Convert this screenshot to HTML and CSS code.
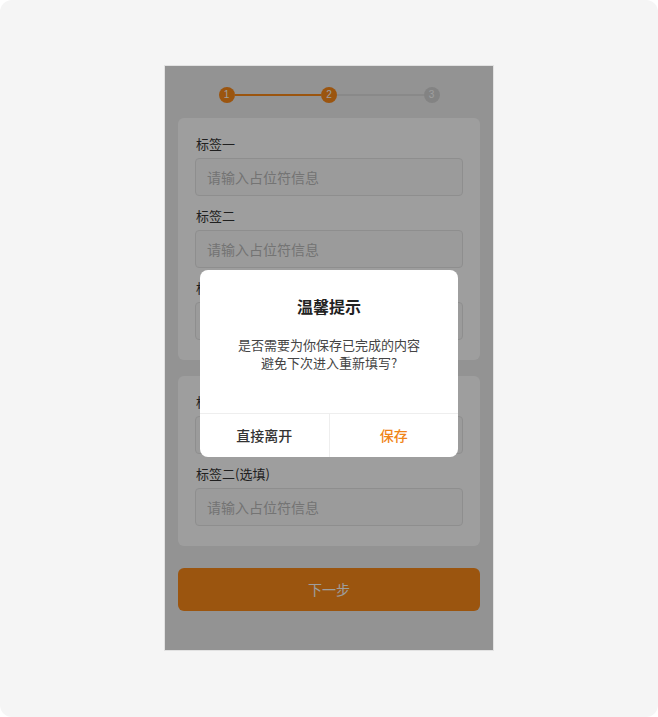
FILE: index.html
```html
<!DOCTYPE html>
<html lang="zh-CN">
<head>
<meta charset="utf-8">
<title>温馨提示</title>
<link rel="stylesheet" href="styles.css">
</head>
<body>
<div class="canvas">
  <div class="phone">
    <div class="steps">
      <div class="dot done">1</div>
      <div class="line done"></div>
      <div class="dot done">2</div>
      <div class="line"></div>
      <div class="dot">3</div>
    </div>
    <div class="card">
      <div class="field first">
        <div class="label">标签一</div>
        <div class="input">请输入占位符信息</div>
      </div>
      <div class="field">
        <div class="label">标签二</div>
        <div class="input">请输入占位符信息</div>
      </div>
      <div class="field">
        <div class="label">标签三</div>
        <div class="input">请输入占位符信息</div>
      </div>
    </div>
    <div class="card">
      <div class="field first">
        <div class="label">标签一</div>
        <div class="input">请输入占位符信息</div>
      </div>
      <div class="field">
        <div class="label">标签二(选填)</div>
        <div class="input">请输入占位符信息</div>
      </div>
    </div>
    <div class="next">下一步</div>
    <div class="mask"></div>
    <div class="dialog">
      <div class="d-title">温馨提示</div>
      <div class="d-body">是否需要为你保存已完成的内容<br>避免下次进入重新填写?</div>
      <div class="d-actions">
        <div class="d-btn">直接离开</div>
        <div class="d-btn primary">保存</div>
      </div>
    </div>
  </div>
</div>
</body>
</html>
```
FILE: styles.css
```css
* { box-sizing: border-box; }
html, body { margin: 0; padding: 0; background: #ffffff; }
body {
  font-family: "Noto Sans CJK SC", "Noto Sans", "Liberation Sans", sans-serif;
  width: 658px;
  height: 717px;
  overflow: hidden;
}
.canvas {
  width: 658px;
  height: 717px;
  background: #f5f5f5;
  border-radius: 12px;
  display: flex;
  justify-content: center;
  padding-top: 66px;
}
.phone {
  position: relative;
  width: 328px;
  height: 584px;
  background: #eeeeee;
  padding: 21px 13px 0;
  overflow: hidden;
  box-shadow: 0 0 0 1px #e2e2e2;
}
.steps {
  width: 221px;
  margin: 0 auto 15px;
  display: flex;
  align-items: center;
}
.dot {
  width: 16px;
  height: 16px;
  border-radius: 50%;
  background: #d4d4d4;
  color: #ffffff;
  font-size: 10px;
  line-height: 16px;
  text-align: center;
  font-family: "Liberation Sans", sans-serif;
  flex: none;
}
.dot.done { background: #fa8919; }
.line {
  flex: 1;
  height: 2px;
  background: #dddddd;
}
.line.done { background: #fa8919; }
.card {
  background: #ffffff;
  border-radius: 6px;
  padding: 16px 17px 20px;
  margin-bottom: 16px;
}
.field { margin-top: 10px; }
.field.first { margin-top: 0; }
.label {
  font-size: 13px;
  line-height: 20px;
  color: #333333;
  margin-bottom: 4px;
  padding-left: 1px;
}
.input {
  height: 38px;
  border: 1px solid #e6e6e6;
  border-radius: 4px;
  background: #fafafa;
  font-size: 14px;
  line-height: 36px;
  color: #bbbbbb;
  padding-left: 11px;
}
.next {
  margin-top: 22px;
  height: 43px;
  border-radius: 6px;
  background: #fa8919;
  color: #ffffff;
  font-size: 14px;
  line-height: 43px;
  text-align: center;
}
.mask {
  position: absolute;
  inset: 0;
  background: rgba(0, 0, 0, 0.38);
}
.dialog {
  position: absolute;
  top: 204px;
  left: 35px;
  width: 258px;
  background: #ffffff;
  border-radius: 8px;
  overflow: hidden;
}
.d-title {
  padding-top: 24px;
  font-size: 16px;
  line-height: 24px;
  font-weight: 700;
  color: #222222;
  text-align: center;
}
.d-body {
  margin-top: 18px;
  padding-bottom: 41px;
  font-size: 13px;
  line-height: 18px;
  color: #444444;
  text-align: center;
}
.d-actions {
  display: flex;
  border-top: 1px solid #eeeeee;
}
.d-btn {
  flex: 1;
  height: 43px;
  line-height: 43px;
  text-align: center;
  font-size: 14px;
  font-weight: 500;
  color: #333333;
}
.d-btn + .d-btn { border-left: 1px solid #eeeeee; }
.d-btn.primary { color: #f08519; }
```
